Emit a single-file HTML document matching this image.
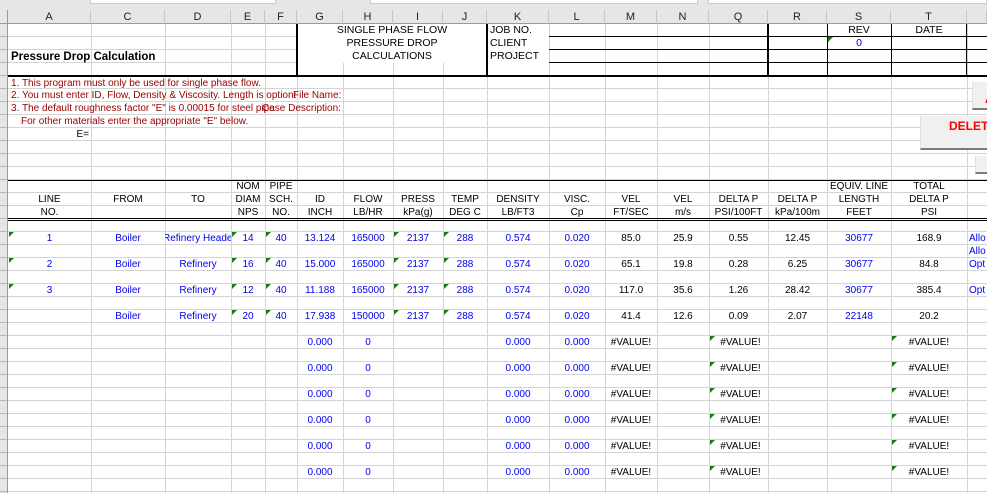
<!DOCTYPE html>
<html><head><meta charset="utf-8"><style>
*{margin:0;padding:0;box-sizing:border-box}
body{width:987px;height:493px;overflow:hidden;background:#fff;font-family:"Liberation Sans",sans-serif;font-size:10px;position:relative}
#g{position:absolute;left:0;top:24px;width:987px;height:469px;background:repeating-linear-gradient(to bottom,transparent 0,transparent 12px,#d4d4d4 12px,#d4d4d4 13px)}
.v{position:absolute;top:24px;bottom:0;width:1px;background:#d4d4d4}
.c{position:absolute;height:13px;line-height:13px;white-space:nowrap;overflow:hidden;text-align:center}
.b{color:#0000ee}.r{color:#900}
.l{text-align:left}.rt{text-align:right}
.t{position:absolute;width:0;height:0;border-top:5px solid #1a7a1a;border-right:5px solid transparent}
.k{position:absolute;background:#000}
.hd{position:absolute;top:10px;height:14px;line-height:14px;text-align:center;font-size:11px;color:#222;background:#e6e6e6;border-right:1px solid #c8c8c8;border-bottom:1px solid #9a9a9a}
.btn{position:absolute;background:#f0f0f0;border-bottom:2px solid #7a7a7a;border-left:1px solid #e0e0e0;color:#f00;font-weight:bold;font-size:12px}
</style></head><body>
<div style="position:absolute;left:0;top:0;width:987px;height:10px;background:#e6e6e6"></div>
<div style="position:absolute;left:90px;top:0;width:186px;height:4px;border:1px solid #ccc;border-top:none;background:#fff"></div>
<div style="position:absolute;left:370px;top:0;width:328px;height:4px;border:1px solid #ccc;border-top:none;background:#fff"></div>
<div style="position:absolute;left:708px;top:0;width:279px;height:4px;border:1px solid #ccc;border-top:none;background:#fff"></div>
<div id="g"></div>
<div class="v" style="left:91px"></div><div class="v" style="left:165px"></div><div class="v" style="left:231px"></div><div class="v" style="left:265px"></div><div class="v" style="left:297px"></div><div class="v" style="left:343px"></div><div class="v" style="left:393px"></div><div class="v" style="left:443px"></div><div class="v" style="left:487px"></div><div class="v" style="left:549px"></div><div class="v" style="left:605px"></div><div class="v" style="left:657px"></div><div class="v" style="left:709px"></div><div class="v" style="left:768px"></div><div class="v" style="left:827px"></div><div class="v" style="left:891px"></div><div class="v" style="left:967px"></div>
<div style="position:absolute;left:0;top:24px;width:8px;height:469px;background:repeating-linear-gradient(to bottom,#e6e6e6 0,#e6e6e6 12px,#b8b8b8 12px,#b8b8b8 13px);border-right:1px solid #9a9a9a"></div>
<div style="position:absolute;left:0;top:10px;width:8px;height:14px;background:#e6e6e6;border-right:1px solid #9a9a9a;border-bottom:1px solid #9a9a9a"></div>
<div class="hd" style="left:8px;width:83px">A</div><div class="hd" style="left:91px;width:74px">C</div><div class="hd" style="left:165px;width:66px">D</div><div class="hd" style="left:231px;width:34px">E</div><div class="hd" style="left:265px;width:32px">F</div><div class="hd" style="left:297px;width:46px">G</div><div class="hd" style="left:343px;width:50px">H</div><div class="hd" style="left:393px;width:50px">I</div><div class="hd" style="left:443px;width:44px">J</div><div class="hd" style="left:487px;width:62px">K</div><div class="hd" style="left:549px;width:56px">L</div><div class="hd" style="left:605px;width:52px">M</div><div class="hd" style="left:657px;width:52px">N</div><div class="hd" style="left:709px;width:59px">Q</div><div class="hd" style="left:768px;width:59px">R</div><div class="hd" style="left:827px;width:64px">S</div><div class="hd" style="left:891px;width:76px">T</div><div class="hd" style="left:967px;width:20px"></div>
<div style="position:absolute;left:298px;top:25px;width:189px;height:38px;background:#fff"></div>
<div style="position:absolute;left:488px;top:25px;width:61px;height:38px;background:#fff"></div>
<div class="k" style="left:549px;top:36px;width:438px;height:1px"></div>
<div class="k" style="left:549px;top:49px;width:438px;height:1px"></div>
<div class="k" style="left:549px;top:62px;width:438px;height:1px"></div>
<div class="k" style="left:296px;top:24px;width:2px;height:52px"></div>
<div class="k" style="left:486px;top:24px;width:2px;height:52px"></div>
<div class="k" style="left:767px;top:24px;width:2px;height:52px"></div>
<div class="k" style="left:827px;top:24px;width:1px;height:52px"></div>
<div class="k" style="left:891px;top:24px;width:1px;height:52px"></div>
<div class="k" style="left:966px;top:24px;width:1px;height:52px"></div>
<div class="k" style="left:8px;top:75px;width:979px;height:2px"></div>
<div class="c" style="left:297px;top:24px;width:190px;font-size:10.5px">SINGLE PHASE FLOW</div>
<div class="c" style="left:297px;top:37px;width:190px;font-size:10.5px">PRESSURE DROP</div>
<div class="c" style="left:297px;top:50px;width:190px;font-size:10.5px">CALCULATIONS</div>
<div class="c l" style="left:490px;top:24px;font-size:10.5px">JOB NO.</div>
<div class="c l" style="left:490px;top:37px;font-size:10.5px">CLIENT</div>
<div class="c l" style="left:490px;top:50px;font-size:10.5px">PROJECT</div>
<div class="c" style="left:827px;top:24px;width:64px;font-size:10.5px">REV</div>
<div class="c" style="left:891px;top:24px;width:76px;font-size:10.5px">DATE</div>
<div class="c b" style="left:827px;top:37px;width:64px;font-size:10.5px">0</div>
<div class="t" style="left:828px;top:37px"></div>
<div class="c l" style="left:11px;top:50px;font-weight:bold;font-size:11.5px;height:14px;line-height:14px">Pressure Drop Calculation</div>
<div class="c l r" style="left:11px;top:77px;font-size:10px">1. This program must only be used for single phase flow.</div>
<div class="c l r" style="left:11px;top:89px;width:285px;font-size:10px">2. You must enter ID, Flow, Density &amp; Viscosity. Length is optional</div>
<div class="c l r" style="left:293px;top:89px;font-size:10px">File Name:</div>
<div class="c l r" style="left:11px;top:102px;font-size:10px">3. The default roughness factor "E" is 0.00015 for steel pipe</div>
<div class="c l r" style="left:262px;top:102px;font-size:10px">Case Description:</div>
<div class="c l r" style="left:21px;top:115px;font-size:10px">For other materials enter the appropriate "E" below.</div>
<div class="c rt" style="left:8px;top:128px;width:81px;font-size:10px">E=</div>
<div class="btn" style="left:972px;top:82px;width:15px;height:28px;padding:10px 0 0 12px">A</div>
<div class="btn" style="left:920px;top:116px;width:67px;height:34px;padding:3px 0 0 28px">DELETE</div>
<div class="btn" style="left:975px;top:156px;width:12px;height:18px"></div>
<div class="k" style="left:8px;top:180px;width:979px;height:1px"></div>
<div class="k" style="left:8px;top:218px;width:979px;height:1px"></div>
<div class="k" style="left:8px;top:220px;width:979px;height:1px"></div>
<div class="c" style="left:231px;top:180px;width:34px">NOM</div>
<div class="c" style="left:265px;top:180px;width:32px">PIPE</div>
<div class="c" style="left:827px;top:180px;width:64px">EQUIV. LINE</div>
<div class="c" style="left:891px;top:180px;width:76px">TOTAL</div>
<div class="c" style="left:8px;top:193px;width:83px">LINE</div>
<div class="c" style="left:91px;top:193px;width:74px">FROM</div>
<div class="c" style="left:165px;top:193px;width:66px">TO</div>
<div class="c" style="left:231px;top:193px;width:34px">DIAM</div>
<div class="c" style="left:265px;top:193px;width:32px">SCH.</div>
<div class="c" style="left:297px;top:193px;width:46px">ID</div>
<div class="c" style="left:343px;top:193px;width:50px">FLOW</div>
<div class="c" style="left:393px;top:193px;width:50px">PRESS</div>
<div class="c" style="left:443px;top:193px;width:44px">TEMP</div>
<div class="c" style="left:487px;top:193px;width:62px">DENSITY</div>
<div class="c" style="left:549px;top:193px;width:56px">VISC.</div>
<div class="c" style="left:605px;top:193px;width:52px">VEL</div>
<div class="c" style="left:657px;top:193px;width:52px">VEL</div>
<div class="c" style="left:709px;top:193px;width:59px">DELTA P</div>
<div class="c" style="left:768px;top:193px;width:59px">DELTA P</div>
<div class="c" style="left:827px;top:193px;width:64px">LENGTH</div>
<div class="c" style="left:891px;top:193px;width:76px">DELTA P</div>
<div class="c" style="left:8px;top:206px;width:83px">NO.</div>
<div class="c" style="left:231px;top:206px;width:34px">NPS</div>
<div class="c" style="left:265px;top:206px;width:32px">NO.</div>
<div class="c" style="left:297px;top:206px;width:46px">INCH</div>
<div class="c" style="left:343px;top:206px;width:50px">LB/HR</div>
<div class="c" style="left:393px;top:206px;width:50px">kPa(g)</div>
<div class="c" style="left:443px;top:206px;width:44px">DEG C</div>
<div class="c" style="left:487px;top:206px;width:62px">LB/FT3</div>
<div class="c" style="left:549px;top:206px;width:56px">Cp</div>
<div class="c" style="left:605px;top:206px;width:52px">FT/SEC</div>
<div class="c" style="left:657px;top:206px;width:52px">m/s</div>
<div class="c" style="left:709px;top:206px;width:59px">PSI/100FT</div>
<div class="c" style="left:768px;top:206px;width:59px">kPa/100m</div>
<div class="c" style="left:827px;top:206px;width:64px">FEET</div>
<div class="c" style="left:891px;top:206px;width:76px">PSI</div>
<div class="c b" style="left:8px;top:232px;width:83px">1</div><div class="t" style="left:9px;top:232px"></div>
<div class="c b" style="left:91px;top:232px;width:74px">Boiler</div>
<div class="c b" style="left:165px;top:232px;width:66px;text-align:left;text-indent:-2px">Refinery Header</div>
<div class="c b" style="left:231px;top:232px;width:34px">14</div><div class="t" style="left:232px;top:232px"></div>
<div class="c b" style="left:265px;top:232px;width:32px">40</div><div class="t" style="left:266px;top:232px"></div>
<div class="c b" style="left:297px;top:232px;width:46px">13.124</div>
<div class="c b" style="left:343px;top:232px;width:50px">165000</div>
<div class="c b" style="left:393px;top:232px;width:50px">2137</div><div class="t" style="left:394px;top:232px"></div>
<div class="c b" style="left:443px;top:232px;width:44px">288</div><div class="t" style="left:444px;top:232px"></div>
<div class="c b" style="left:487px;top:232px;width:62px">0.574</div>
<div class="c b" style="left:549px;top:232px;width:56px">0.020</div>
<div class="c" style="left:605px;top:232px;width:52px">85.0</div>
<div class="c" style="left:657px;top:232px;width:52px">25.9</div>
<div class="c" style="left:709px;top:232px;width:59px">0.55</div>
<div class="c" style="left:768px;top:232px;width:59px">12.45</div>
<div class="c b" style="left:827px;top:232px;width:64px">30677</div>
<div class="c" style="left:891px;top:232px;width:76px">168.9</div>
<div class="c b l" style="left:969px;top:232px">Allo</div>
<div class="c b l" style="left:969px;top:245px">Allo</div>
<div class="c b" style="left:8px;top:258px;width:83px">2</div><div class="t" style="left:9px;top:258px"></div>
<div class="c b" style="left:91px;top:258px;width:74px">Boiler</div>
<div class="c b" style="left:165px;top:258px;width:66px">Refinery</div>
<div class="c b" style="left:231px;top:258px;width:34px">16</div><div class="t" style="left:232px;top:258px"></div>
<div class="c b" style="left:265px;top:258px;width:32px">40</div><div class="t" style="left:266px;top:258px"></div>
<div class="c b" style="left:297px;top:258px;width:46px">15.000</div>
<div class="c b" style="left:343px;top:258px;width:50px">165000</div>
<div class="c b" style="left:393px;top:258px;width:50px">2137</div><div class="t" style="left:394px;top:258px"></div>
<div class="c b" style="left:443px;top:258px;width:44px">288</div><div class="t" style="left:444px;top:258px"></div>
<div class="c b" style="left:487px;top:258px;width:62px">0.574</div>
<div class="c b" style="left:549px;top:258px;width:56px">0.020</div>
<div class="c" style="left:605px;top:258px;width:52px">65.1</div>
<div class="c" style="left:657px;top:258px;width:52px">19.8</div>
<div class="c" style="left:709px;top:258px;width:59px">0.28</div>
<div class="c" style="left:768px;top:258px;width:59px">6.25</div>
<div class="c b" style="left:827px;top:258px;width:64px">30677</div>
<div class="c" style="left:891px;top:258px;width:76px">84.8</div>
<div class="c b l" style="left:969px;top:258px">Opt</div>
<div class="c b" style="left:8px;top:284px;width:83px">3</div><div class="t" style="left:9px;top:284px"></div>
<div class="c b" style="left:91px;top:284px;width:74px">Boiler</div>
<div class="c b" style="left:165px;top:284px;width:66px">Refinery</div>
<div class="c b" style="left:231px;top:284px;width:34px">12</div><div class="t" style="left:232px;top:284px"></div>
<div class="c b" style="left:265px;top:284px;width:32px">40</div><div class="t" style="left:266px;top:284px"></div>
<div class="c b" style="left:297px;top:284px;width:46px">11.188</div>
<div class="c b" style="left:343px;top:284px;width:50px">165000</div>
<div class="c b" style="left:393px;top:284px;width:50px">2137</div><div class="t" style="left:394px;top:284px"></div>
<div class="c b" style="left:443px;top:284px;width:44px">288</div><div class="t" style="left:444px;top:284px"></div>
<div class="c b" style="left:487px;top:284px;width:62px">0.574</div>
<div class="c b" style="left:549px;top:284px;width:56px">0.020</div>
<div class="c" style="left:605px;top:284px;width:52px">117.0</div>
<div class="c" style="left:657px;top:284px;width:52px">35.6</div>
<div class="c" style="left:709px;top:284px;width:59px">1.26</div>
<div class="c" style="left:768px;top:284px;width:59px">28.42</div>
<div class="c b" style="left:827px;top:284px;width:64px">30677</div>
<div class="c" style="left:891px;top:284px;width:76px">385.4</div>
<div class="c b l" style="left:969px;top:284px">Opt</div>
<div class="c b" style="left:91px;top:310px;width:74px">Boiler</div>
<div class="c b" style="left:165px;top:310px;width:66px">Refinery</div>
<div class="c b" style="left:231px;top:310px;width:34px">20</div><div class="t" style="left:232px;top:310px"></div>
<div class="c b" style="left:265px;top:310px;width:32px">40</div><div class="t" style="left:266px;top:310px"></div>
<div class="c b" style="left:297px;top:310px;width:46px">17.938</div>
<div class="c b" style="left:343px;top:310px;width:50px">150000</div>
<div class="c b" style="left:393px;top:310px;width:50px">2137</div><div class="t" style="left:394px;top:310px"></div>
<div class="c b" style="left:443px;top:310px;width:44px">288</div><div class="t" style="left:444px;top:310px"></div>
<div class="c b" style="left:487px;top:310px;width:62px">0.574</div>
<div class="c b" style="left:549px;top:310px;width:56px">0.020</div>
<div class="c" style="left:605px;top:310px;width:52px">41.4</div>
<div class="c" style="left:657px;top:310px;width:52px">12.6</div>
<div class="c" style="left:709px;top:310px;width:59px">0.09</div>
<div class="c" style="left:768px;top:310px;width:59px">2.07</div>
<div class="c b" style="left:827px;top:310px;width:64px">22148</div>
<div class="c" style="left:891px;top:310px;width:76px">20.2</div>
<div class="c b" style="left:297px;top:336px;width:46px">0.000</div><div class="c b" style="left:343px;top:336px;width:50px">0</div><div class="c b" style="left:487px;top:336px;width:62px">0.000</div><div class="c b" style="left:549px;top:336px;width:56px">0.000</div><div class="c" style="left:605px;top:336px;width:52px">#VALUE!</div><div class="t" style="left:710px;top:336px"></div><div class="c" style="left:709px;top:336px;width:59px;padding-left:4px">#VALUE!</div><div class="t" style="left:892px;top:336px"></div><div class="c" style="left:891px;top:336px;width:76px">#VALUE!</div>
<div class="c b" style="left:297px;top:362px;width:46px">0.000</div><div class="c b" style="left:343px;top:362px;width:50px">0</div><div class="c b" style="left:487px;top:362px;width:62px">0.000</div><div class="c b" style="left:549px;top:362px;width:56px">0.000</div><div class="c" style="left:605px;top:362px;width:52px">#VALUE!</div><div class="t" style="left:710px;top:362px"></div><div class="c" style="left:709px;top:362px;width:59px;padding-left:4px">#VALUE!</div><div class="t" style="left:892px;top:362px"></div><div class="c" style="left:891px;top:362px;width:76px">#VALUE!</div>
<div class="c b" style="left:297px;top:388px;width:46px">0.000</div><div class="c b" style="left:343px;top:388px;width:50px">0</div><div class="c b" style="left:487px;top:388px;width:62px">0.000</div><div class="c b" style="left:549px;top:388px;width:56px">0.000</div><div class="c" style="left:605px;top:388px;width:52px">#VALUE!</div><div class="t" style="left:710px;top:388px"></div><div class="c" style="left:709px;top:388px;width:59px;padding-left:4px">#VALUE!</div><div class="t" style="left:892px;top:388px"></div><div class="c" style="left:891px;top:388px;width:76px">#VALUE!</div>
<div class="c b" style="left:297px;top:414px;width:46px">0.000</div><div class="c b" style="left:343px;top:414px;width:50px">0</div><div class="c b" style="left:487px;top:414px;width:62px">0.000</div><div class="c b" style="left:549px;top:414px;width:56px">0.000</div><div class="c" style="left:605px;top:414px;width:52px">#VALUE!</div><div class="t" style="left:710px;top:414px"></div><div class="c" style="left:709px;top:414px;width:59px;padding-left:4px">#VALUE!</div><div class="t" style="left:892px;top:414px"></div><div class="c" style="left:891px;top:414px;width:76px">#VALUE!</div>
<div class="c b" style="left:297px;top:440px;width:46px">0.000</div><div class="c b" style="left:343px;top:440px;width:50px">0</div><div class="c b" style="left:487px;top:440px;width:62px">0.000</div><div class="c b" style="left:549px;top:440px;width:56px">0.000</div><div class="c" style="left:605px;top:440px;width:52px">#VALUE!</div><div class="t" style="left:710px;top:440px"></div><div class="c" style="left:709px;top:440px;width:59px;padding-left:4px">#VALUE!</div><div class="t" style="left:892px;top:440px"></div><div class="c" style="left:891px;top:440px;width:76px">#VALUE!</div>
<div class="c b" style="left:297px;top:466px;width:46px">0.000</div><div class="c b" style="left:343px;top:466px;width:50px">0</div><div class="c b" style="left:487px;top:466px;width:62px">0.000</div><div class="c b" style="left:549px;top:466px;width:56px">0.000</div><div class="c" style="left:605px;top:466px;width:52px">#VALUE!</div><div class="t" style="left:710px;top:466px"></div><div class="c" style="left:709px;top:466px;width:59px;padding-left:4px">#VALUE!</div><div class="t" style="left:892px;top:466px"></div><div class="c" style="left:891px;top:466px;width:76px">#VALUE!</div>
</body></html>
